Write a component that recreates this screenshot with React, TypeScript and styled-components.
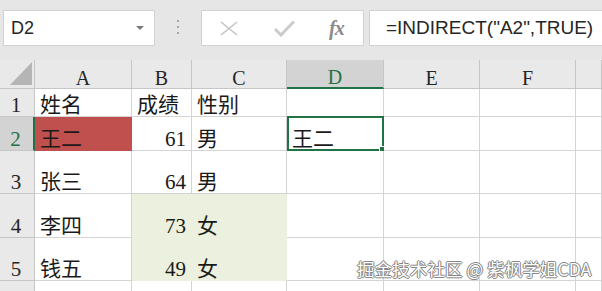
import React from 'react';
import styled, { createGlobalStyle } from 'styled-components';

const GREEN = '#217346';
const GRID = '#d4d4d4';
const HEAD_LINE = '#c6c6c6';

const columns = ['A', 'B', 'C', 'D', 'E', 'F', ''];
const colWidths = [97, 60, 95, 97, 96, 96];
const rowHeights = [28, 34, 43, 44, 43, 43];

type CellData = { text?: string; num?: boolean; fill?: string };

const RED = '#c0504d';
const LIGHT = '#ebf1de';

const rows: CellData[][] = [
	[{ text: '姓名' }, { text: '成绩' }, { text: '性别' }, {}, {}, {}, {}],
	[{ text: '王二', fill: RED }, { text: '61', num: true }, { text: '男' }, { text: '王二' }, {}, {}, {}],
	[{ text: '张三' }, { text: '64', num: true }, { text: '男' }, {}, {}, {}, {}],
	[{ text: '李四' }, { text: '73', num: true, fill: LIGHT }, { text: '女', fill: LIGHT }, {}, {}, {}, {}],
	[{ text: '钱五' }, { text: '49', num: true, fill: LIGHT }, { text: '女', fill: LIGHT }, {}, {}, {}, {}],
	[{}, {}, {}, {}, {}, {}, {}],
];

const App: React.FunctionComponent = () => {
	return (
		<Page>
			<GlobalStyle />
			<Toolbar>
				<NameBox>
					<NameText>D2</NameText>
					<svg width="8" height="4" viewBox="0 0 8 4">
						<path d="M0 0 L8 0 L4 4 Z" fill="#7a7a7a" />
					</svg>
				</NameBox>
				<Grip>
					<Dot />
					<Dot />
					<Dot />
				</Grip>
				<ButtonBox>
					<IconSlot>
						<svg width="18" height="15" viewBox="0 0 18 15">
							<path d="M1 1 L17 14 M17 1 L1 14" stroke="#c4c4c4" strokeWidth="1.6" fill="none" />
						</svg>
					</IconSlot>
					<IconSlot $gap={36}>
						<svg width="21" height="17" viewBox="0 0 21 17">
							<path d="M1 9 L7 15 L20 1.5" stroke="#cbcbcb" strokeWidth="3" fill="none" />
						</svg>
					</IconSlot>
					<Fx>fx</Fx>
				</ButtonBox>
				<FormulaBox>=INDIRECT("A2",TRUE)</FormulaBox>
			</Toolbar>
			<Sheet>
				<Corner>
					<svg width="22" height="23" viewBox="0 0 22 23">
						<path d="M22 0 L22 23 L0 23 Z" fill="#b5b5b5" />
					</svg>
				</Corner>
				{columns.map((c, i) => (
					<ColHead key={c || i} $selected={c === 'D'}>
						{c}
					</ColHead>
				))}
				{rows.map((row, r) => (
					<React.Fragment key={r}>
						<RowHead $selected={r === 1}>{r + 1}</RowHead>
						{row.map((cell, c) => (
							<Cell key={c} $num={cell.num} $fill={cell.fill}>
								{cell.text}
								{r === 1 && c === 3 && (
									<Selection>
										<Handle />
									</Selection>
								)}
							</Cell>
						))}
					</React.Fragment>
				))}
			</Sheet>
			<Watermark>掘金技术社区 @ 紫枫学姐CDA</Watermark>
		</Page>
	);
};

const GlobalStyle = createGlobalStyle`
	html, body {
		margin: 0;
		padding: 0;
		background: #ffffff;
		overflow: hidden;
	}
`;

const Page = styled.div`
	position: relative;
	width: 602px;
	height: 291px;
	overflow: hidden;
	background: #ffffff;
`;

/* ************** Toolbar ************** */
const Toolbar = styled.div`
	display: flex;
	align-items: flex-start;
	height: 60px;
	padding: 10px 0 0 3px;
	box-sizing: border-box;
	background: #e6e6e6;
	font-family: 'Liberation Sans', 'Noto Sans', sans-serif;
`;

const BoxBase = styled.div`
	display: flex;
	align-items: center;
	height: 36px;
	box-sizing: border-box;
	background: #ffffff;
	border: 1px solid #d2d2d2;
`;

const NameBox = styled(BoxBase)`
	width: 152px;
	justify-content: space-between;
	padding: 0 10px 0 7px;
`;

const NameText = styled.span`
	font-size: 18px;
	color: #262626;
`;

const Grip = styled.div`
	display: flex;
	flex-direction: column;
	gap: 4px;
	width: 46px;
	align-items: center;
	padding-top: 10px;
`;

const Dot = styled.span`
	width: 2px;
	height: 2px;
	background: #a6a6a6;
`;

const ButtonBox = styled(BoxBase)`
	width: 163px;
	padding-left: 18px;
`;

const IconSlot = styled.span<{ $gap?: number }>`
	display: flex;
	align-items: center;
	margin-left: ${p => p.$gap || 0}px;
`;

const Fx = styled.span`
	margin-left: 34px;
	font-family: 'Liberation Serif', serif;
	font-style: italic;
	font-weight: bold;
	font-size: 20px;
	color: #8a8a8a;
	letter-spacing: -1px;
`;

const FormulaBox = styled(BoxBase)`
	flex: 1;
	margin-left: 5px;
	padding-left: 16px;
	font-size: 19px;
	color: #262626;
	white-space: nowrap;
	border-right: none;
`;

/* ************** Sheet ************** */
const Sheet = styled.div`
	display: grid;
	grid-template-columns: 35px ${colWidths.map(w => `${w}px`).join(' ')} 1fr;
	grid-template-rows: 29px ${rowHeights.map(h => `${h}px`).join(' ')};
	font-family: 'Liberation Serif', 'Noto Sans CJK SC', serif;
`;

const Corner = styled.div`
	display: flex;
	align-items: flex-end;
	justify-content: flex-end;
	padding: 0 2px 3px 0;
	box-sizing: border-box;
	background: #e9e9e9;
	border-right: 1px solid ${HEAD_LINE};
	border-bottom: 1px solid ${HEAD_LINE};
`;

const ColHead = styled.div<{ $selected?: boolean }>`
	display: flex;
	align-items: center;
	justify-content: center;
	box-sizing: border-box;
	padding-top: 8px;
	font-size: 20px;
	color: ${p => (p.$selected ? GREEN : '#262626')};
	background: ${p => (p.$selected ? '#d3d3d3' : '#e9e9e9')};
	border-right: 1px solid ${HEAD_LINE};
	border-bottom: ${p => (p.$selected ? `2px solid ${GREEN}` : `1px solid ${HEAD_LINE}`)};
`;

const RowHead = styled.div<{ $selected?: boolean }>`
	display: flex;
	align-items: flex-end;
	justify-content: center;
	box-sizing: border-box;
	padding: 0 2px 0 0;
	font-size: 21px;
	line-height: 1;
	color: ${p => (p.$selected ? GREEN : '#262626')};
	background: ${p => (p.$selected ? '#d3d3d3' : '#e9e9e9')};
	border-right: ${p => (p.$selected ? `2px solid ${GREEN}` : `1px solid ${HEAD_LINE}`)};
	border-bottom: 1px solid ${HEAD_LINE};
`;

const Cell = styled.div<{ $num?: boolean; $fill?: string }>`
	position: relative;
	display: flex;
	align-items: flex-end;
	justify-content: ${p => (p.$num ? 'flex-end' : 'flex-start')};
	box-sizing: border-box;
	padding: 0 5px 0 5px;
	font-size: 21px;
	line-height: 1;
	color: #1a1a1a;
	white-space: nowrap;
	background: ${p => p.$fill || '#ffffff'};
	border-right: 1px solid ${p => p.$fill || GRID};
	border-bottom: 1px solid ${p => p.$fill || GRID};
`;

const Selection = styled.div`
	position: absolute;
	left: 0;
	top: -1px;
	right: -1px;
	bottom: -1px;
	border: 2px solid ${GREEN};
`;

const Handle = styled.span`
	position: absolute;
	right: -5px;
	bottom: -5px;
	width: 6px;
	height: 6px;
	background: ${GREEN};
	border: 1px solid #ffffff;
`;

const Watermark = styled.div`
	position: absolute;
	left: 357px;
	top: 258px;
	font-family: 'Noto Sans CJK SC', sans-serif;
	font-size: 17.6px;
	line-height: 1.2;
	color: #ffffff;
	white-space: nowrap;
	text-shadow:
		0 0 1px #6f6f6f,
		1px 0 0 #8a8a8a,
		-1px 0 0 #8a8a8a,
		0 1px 0 #8a8a8a,
		0 -1px 0 #8a8a8a;
`;

export default React.memo(App);
